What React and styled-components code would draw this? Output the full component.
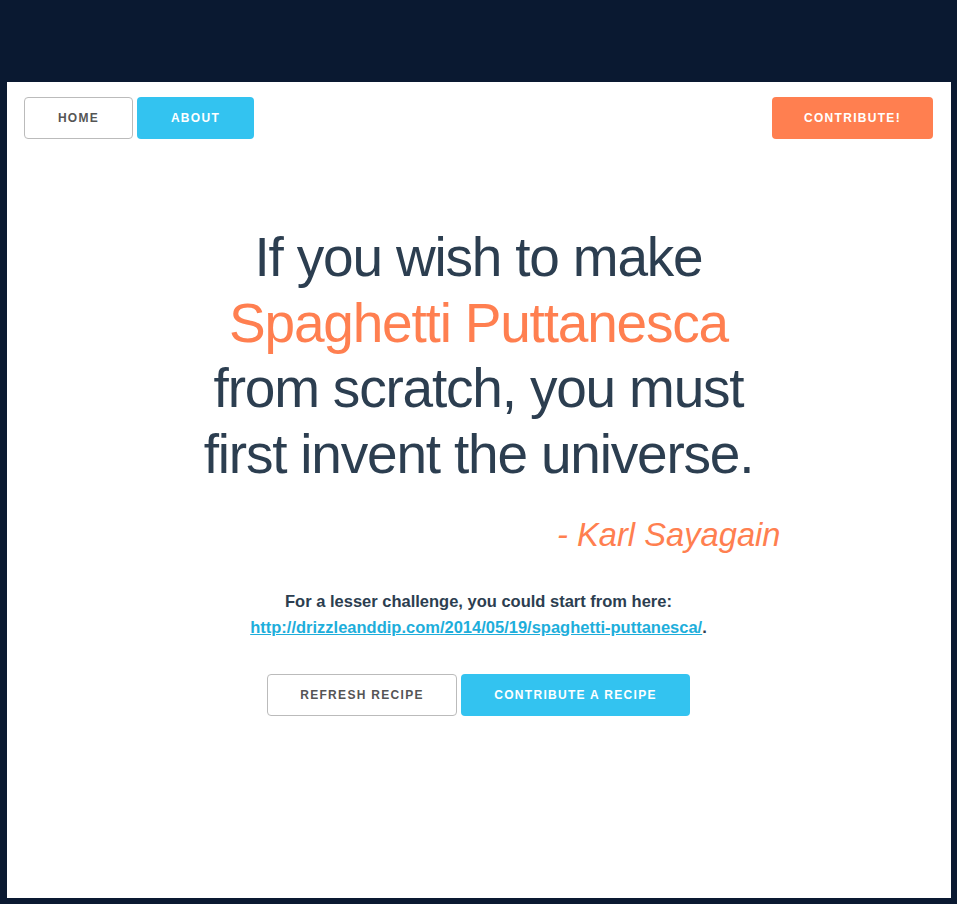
import React from "react";
import styled, { createGlobalStyle } from "styled-components";

const Global = createGlobalStyle`
  html, body { margin: 0; padding: 0; background: #0a1931; }
  body { font-family: "Liberation Sans", Arial, sans-serif; }
  * { box-sizing: border-box; }
`;

const Page = styled.div`
  min-height: 904px;
  padding: 82px 6px 6px 7px;
  display: flex;
  flex-direction: column;
`;

const Panel = styled.main`
  background: #fff;
  height: 816px;
  padding: 15px 18px 0 17px;
`;

const Nav = styled.nav`
  display: flex;
  align-items: center;
  justify-content: space-between;
`;

const Group = styled.div`
  display: flex;
  gap: 4px;
`;

const Button = styled.button`
  height: 42px;
  width: ${(p) => p.$w}px;
  border-radius: 4px;
  font-family: "Liberation Sans", Arial, sans-serif;
  font-weight: 700;
  font-size: 12px;
  letter-spacing: 1.3px;
  text-transform: uppercase;
  cursor: pointer;
  border: 1px solid
    ${(p) => (p.$variant === "default" ? "#bbb" : "transparent")};
  background: ${(p) =>
    p.$variant === "blue"
      ? "#33c3f0"
      : p.$variant === "orange"
      ? "#ff7f50"
      : "transparent"};
  color: ${(p) => (p.$variant === "default" ? "#555" : "#fff")};
  padding: 0;
`;

const Hero = styled.section`
  width: 604px;
  margin: 86px auto 0;
  display: flex;
  flex-direction: column;
`;

const Quote = styled.h1`
  margin: 0;
  font-weight: 400;
  font-size: 55px;
  line-height: 65.5px;
  letter-spacing: -1.2px;
  color: #2c3e50;
  text-align: center;
`;

const Accent = styled.span`
  color: #ff7f50;
`;

const Author = styled.p`
  margin: 29px 0 0;
  text-align: right;
  font-style: italic;
  font-size: 32.7px;
  line-height: 37px;
  color: #ff7f50;
`;

const Challenge = styled.p`
  margin: 35px 0 0;
  text-align: center;
  font-weight: 700;
  font-size: 16.5px;
  line-height: 26px;
  color: #2c3e50;
`;

const Link = styled.a`
  color: #1eaedb;
`;

const Actions = styled.div`
  display: flex;
  justify-content: center;
  gap: 4px;
  margin-top: 34px;
`;

export default function App() {
  return (
    <>
      <Global />
      <Page>
        <Panel>
          <Nav>
            <Group>
              <Button $variant="default" $w={109}>Home</Button>
              <Button $variant="blue" $w={117}>About</Button>
            </Group>
            <Button $variant="orange" $w={161}>Contribute!</Button>
          </Nav>
          <Hero>
            <Quote>
              If you wish to make
              <br />
              <Accent>Spaghetti Puttanesca</Accent>
              <br />
              from scratch, you must
              <br />
              first invent the universe.
            </Quote>
            <Author>- Karl Sayagain</Author>
          </Hero>
          <Challenge>
            For a lesser challenge, you could start from here:
            <br />
            <Link href="#">http://drizzleanddip.com/2014/05/19/spaghetti-puttanesca/</Link>.
          </Challenge>
          <Actions>
            <Button $variant="default" $w={190}>Refresh recipe</Button>
            <Button $variant="blue" $w={229}>Contribute a recipe</Button>
          </Actions>
        </Panel>
      </Page>
    </>
  );
}
